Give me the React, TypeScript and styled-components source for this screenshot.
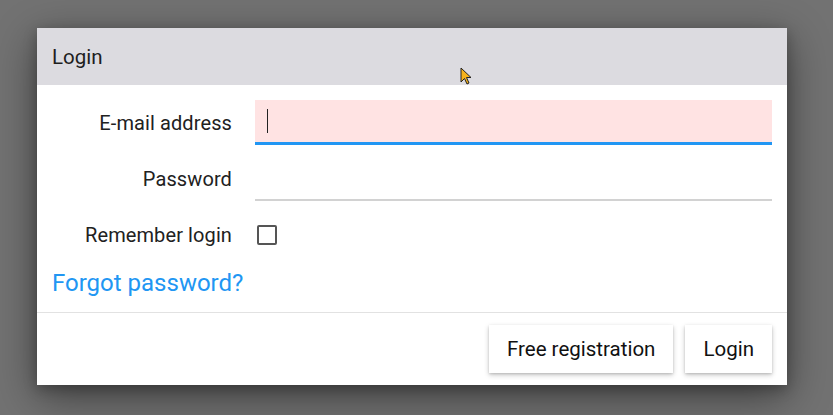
import React from 'react';
import styled, { createGlobalStyle } from 'styled-components';

const GlobalStyle = createGlobalStyle`
  html, body {
    margin: 0;
    padding: 0;
    background: #727272;
  }
  body {
    font-family: Roboto, "Liberation Sans", sans-serif;
  }
`;

const Backdrop = styled.div`
  position: relative;
  width: 833px;
  height: 415px;
  padding: 28px 46px 0 37px;
  box-sizing: border-box;
  background: #727272;
`;

const Dialog = styled.div`
  width: 750px;
  height: 357px;
  background: #fff;
  display: flex;
  flex-direction: column;
  box-shadow: 0 12px 40px rgba(0, 0, 0, 0.45), 0 4px 12px rgba(0, 0, 0, 0.25);
`;

const Header = styled.div`
  height: 57px;
  flex-shrink: 0;
  background: #dcdbe0;
  display: flex;
  align-items: center;
  padding: 0 15px;
  font-size: 20.5px;
  color: #1e1e1e;
`;

const Body = styled.div`
  padding: 15px 15px 0 15px;
  display: flex;
  flex-direction: column;
  gap: 11px;
`;

const Row = styled.div`
  display: grid;
  grid-template-columns: 180px 1fr;
  column-gap: 23px;
  align-items: center;
  height: 45px;
`;

const Label = styled.label`
  text-align: right;
  font-size: 20px;
  letter-spacing: 0.1px;
  color: #212121;
`;

interface InputProps {
  focused?: boolean;
}

const InputBox = styled.div<InputProps>`
  height: 45px;
  box-sizing: border-box;
  display: flex;
  align-items: center;
  padding-left: 12px;
  background: ${({ focused }) => (focused ? '#ffe3e3' : 'transparent')};
  border-bottom: ${({ focused }) => (focused ? '3px solid #2196f3' : '2px solid #d2d2d2')};
`;

const Caret = styled.span`
  display: block;
  width: 1px;
  height: 24px;
  background: #222;
`;

const Checkbox = styled.span`
  display: block;
  width: 16px;
  height: 16px;
  margin-left: 2px;
  border: 2px solid #555;
  border-radius: 2px;
`;

const Forgot = styled.a`
  font-size: 24px;
  line-height: 28px;
  color: #2196f3;
  text-decoration: none;
  margin-top: 1px;
  align-self: flex-start;
`;

const Footer = styled.div`
  border-top: 1px solid #e2e2e2;
  flex: 1;
  margin-top: 15px;
  display: flex;
  justify-content: flex-end;
  align-items: center;
  gap: 12px;
  padding: 0 15px;
`;

const Button = styled.button`
  height: 48px;
  padding: 0 18px;
  border: none;
  background: #fff;
  font-family: Roboto, "Liberation Sans", sans-serif;
  font-size: 20.5px;
  color: #111;
  box-shadow: 0 2px 5px rgba(0, 0, 0, 0.22), 0 1px 2px rgba(0, 0, 0, 0.12);
  cursor: pointer;
`;

const Pointer = styled.svg`
  position: absolute;
  left: 460px;
  top: 67px;
`;

const App = () => (
  <>
    <GlobalStyle />
    <Backdrop>
      <Dialog>
        <Header>Login</Header>
        <Body>
          <Row>
            <Label>E-mail address</Label>
            <InputBox focused>
              <Caret />
            </InputBox>
          </Row>
          <Row>
            <Label>Password</Label>
            <InputBox />
          </Row>
          <Row>
            <Label>Remember login</Label>
            <Checkbox />
          </Row>
          <Forgot href="#">Forgot password?</Forgot>
        </Body>
        <Footer>
          <Button>Free registration</Button>
          <Button>Login</Button>
        </Footer>
      </Dialog>
      <Pointer width="14" height="20" viewBox="0 0 14 20">
        <path d="M1 1 L1 15 L4.5 11.5 L7 17 L9 16 L6.5 10.5 L11 10.5 Z" fill="#f5b21b" stroke="#222" strokeWidth="1" />
      </Pointer>
    </Backdrop>
  </>
);

export default App;
